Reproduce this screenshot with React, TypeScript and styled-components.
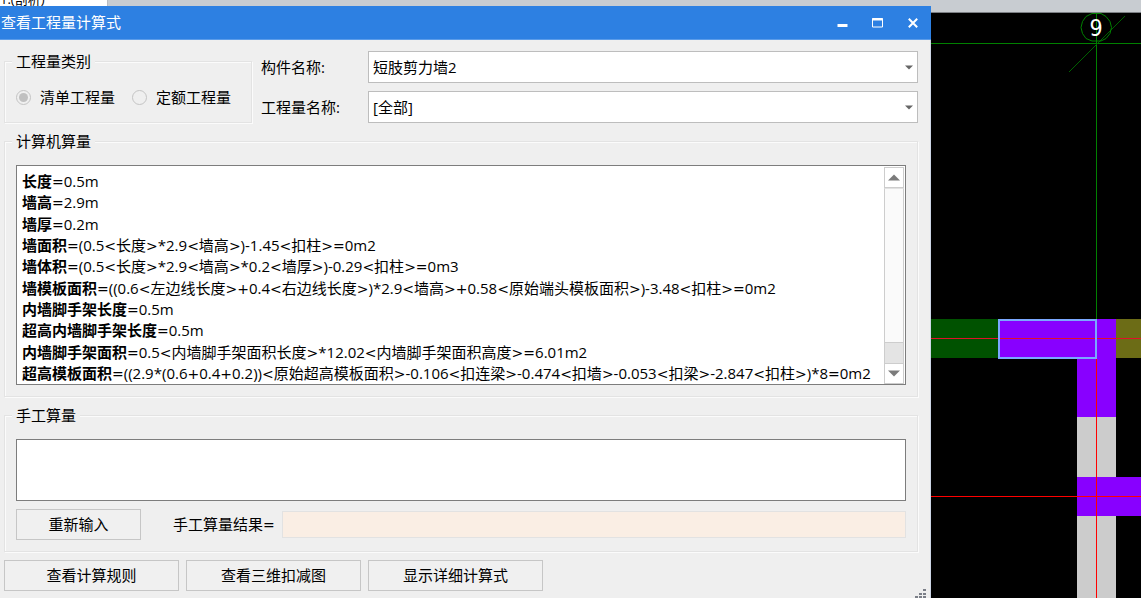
import React from "react";
import styled, { createGlobalStyle } from "styled-components";

const FACE = "#efefef";

const GlobalStyle = createGlobalStyle`
  *, *::before, *::after { box-sizing: border-box; }
  html, body { margin: 0; background: #000; }
  body, button, input, select, textarea {
    font-family: "Open Sans", "Noto Sans CJK SC", sans-serif;
    font-size: 15px;
    line-height: 21px;
    color: #000;
  }
`;

const Workspace = styled.div`
  display: flex;
  min-height: 100vh;
  overflow: hidden;
`;

const DialogColumn = styled.div`
  flex: 1;
  min-width: 0;
  display: flex;
  flex-direction: column;
`;

const TabStrip = styled.div`
  display: flex;
  height: 6px;
  background: #c8ccd1;
`;

const ActiveTab = styled.div`
  width: 108px;
  height: 6px;
  overflow: hidden;
  display: flex;
  align-items: flex-end;
  background: #fff;
  border-right: 1px solid #b9bdc2;
`;

const TabText = styled.span`
  flex: none;
  font-size: 13px;
  line-height: 14px;
`;

const Dialog = styled.section`
  position: relative;
  flex: 1;
  display: flex;
  flex-direction: column;
  background: ${FACE};
  border-right: 1px solid #cdd6e6;
`;

const TitleBar = styled.header`
  display: flex;
  align-items: center;
  justify-content: space-between;
  height: 34px;
  margin-right: -1px;
  padding: 0 1px;
  background: #2d80e2;
  border-bottom: 1px solid #5b9ce9;
`;

const Title = styled.h1`
  margin: 0;
  font-size: 15px;
  font-weight: 400;
  color: #fff;
`;

const WindowButtons = styled.div`
  display: flex;
`;

const WindowButton = styled.button`
  display: grid;
  place-items: center;
  width: 35px;
  height: 33px;
  padding: 0;
  border: 0;
  background: none;
`;

const Body = styled.div`
  flex: 1;
  display: flex;
  flex-direction: column;
  gap: 8px;
  padding: 11px 12px 7px 4px;
`;

const TopRow = styled.div`
  display: flex;
  gap: 9px;
  height: 72px;
`;

const Group = styled.fieldset<{ $width?: string }>`
  width: ${(p) => p.$width ?? "auto"};
  min-width: 0;
  margin: 0;
  padding: 0 11px 11px;
  border: 1px solid #e3e3e3;
  box-shadow: 1px 1px 0 #fbfbfb, inset 1px 1px 0 #fbfbfb;
`;

const Legend = styled.legend`
  margin-left: -4px;
  padding: 0 4px;
  background: ${FACE};
`;

const RadioRow = styled.div`
  display: flex;
  gap: 17px;
  padding-top: 15px;
`;

const RadioLabel = styled.label`
  display: flex;
  align-items: center;
  gap: 9px;
  white-space: nowrap;
`;

const Radio = styled.input`
  appearance: none;
  display: grid;
  place-items: center;
  flex: none;
  width: 15px;
  height: 15px;
  margin: 0;
  border: 1px solid #c4c4c4;
  border-radius: 50%;

  &:checked::before {
    content: "";
    width: 9px;
    height: 9px;
    border-radius: 50%;
    background: #c0c0c0;
  }
`;

const Fields = styled.div`
  flex: 1;
  display: grid;
  grid-template-columns: 107px 1fr;
  grid-auto-rows: 32px;
  row-gap: 8px;
  align-items: center;
`;

const SelectBox = styled.div`
  position: relative;
`;

const Select = styled.select`
  appearance: none;
  display: block;
  width: 100%;
  height: 32px;
  padding: 0 24px 0 4px;
  border: 1px solid #bdbdbd;
  border-radius: 0;
  background: #fff;
`;

const SelectArrow = styled.svg`
  position: absolute;
  right: 5px;
  top: 14px;
  pointer-events: none;
`;

const FormulaBox = styled.div`
  display: flex;
  height: 220px;
  margin-top: 13px;
  border: 1px solid #7d7d7d;
  background: #fff;
`;

const FormulaList = styled.div`
  flex: 1;
  min-width: 0;
  display: flex;
  flex-direction: column;
  justify-content: space-between;
  padding: 5px 0 0 5px;
  white-space: nowrap;
  overflow: hidden;
`;

const Formula = styled.div`
  height: 21px;
`;

const Operator = styled.span`
  font-family: "DejaVu Sans", sans-serif;
  font-size: 14px;
`;

const ScrollBar = styled.div`
  display: flex;
  flex-direction: column;
  width: 21px;
  padding: 1px 1px 0 0;
`;

const ScrollButton = styled.button`
  display: grid;
  place-items: center;
  height: 21px;
  padding: 0;
  border: 1px solid #cdcdcd;
  background: #fff;
`;

const ScrollThumb = styled.div`
  flex: 1;
  border: 1px solid #cdcdcd;
  border-top-color: #e2e2e2;
  background: #fafafa;
`;

const ScrollTrack = styled.div`
  height: 20px;
  border: 1px solid #cdcdcd;
  border-width: 0 1px;
  background: #e4e4e4;
`;

const ManualInput = styled.textarea`
  display: block;
  width: 100%;
  height: 62px;
  margin-top: 13px;
  padding: 4px 5px;
  border: 1px solid #7d7d7d;
  border-radius: 0;
  background: #fff;
  resize: none;
`;

const ResultRow = styled.div`
  display: flex;
  align-items: center;
  padding-top: 8px;
`;

const PushButton = styled.button<{ $width: number }>`
  width: ${(p) => p.$width}px;
  height: 31px;
  padding: 0;
  border: 1px solid #c6c6c6;
  border-radius: 0;
  background: #f0f0f0;
`;

const ResultLabel = styled.label`
  margin: 0 7px 0 32px;
  white-space: nowrap;
`;

const ResultInput = styled.input`
  flex: 1;
  min-width: 0;
  height: 27px;
  border: 1px solid #e2e2e2;
  border-radius: 0;
  background: #faeee4;
`;

const Actions = styled.footer`
  display: flex;
  gap: 7px;
`;

const ResizeGrip = styled.svg`
  position: absolute;
  right: 4px;
  bottom: 0;
`;

const DrawingColumn = styled.div`
  width: 210px;
  display: flex;
  flex-direction: column;
`;

const DrawingStrip = styled.div`
  height: 13px;
  background: #c8ccd1;
  border-bottom: 1px solid #7c7f84;
`;

const Drawing = styled.svg`
  display: block;
  flex: 1;
  width: 100%;
  min-height: 0;
  background: #000;
`;

const formulas: [string, string][] = [
  ["长度", "=0.5m"],
  ["墙高", "=2.9m"],
  ["墙厚", "=0.2m"],
  ["墙面积", "=(0.5<长度>*2.9<墙高>)-1.45<扣柱>=0m2"],
  ["墙体积", "=(0.5<长度>*2.9<墙高>*0.2<墙厚>)-0.29<扣柱>=0m3"],
  ["墙模板面积", "=((0.6<左边线长度>+0.4<右边线长度>)*2.9<墙高>+0.58<原始端头模板面积>)-3.48<扣柱>=0m2"],
  ["内墙脚手架长度", "=0.5m"],
  ["超高内墙脚手架长度", "=0.5m"],
  ["内墙脚手架面积", "=0.5<内墙脚手架面积长度>*12.02<内墙脚手架面积高度>=6.01m2"],
  ["超高模板面积", "=((2.9*(0.6+0.4+0.2))<原始超高模板面积>-0.106<扣连梁>-0.474<扣墙>-0.053<扣梁>-2.847<扣柱>)*8=0m2"],
];

// Splits an expression so that its wide operators get their own face.
function Expression({ text }: { text: string }) {
  return (
    <>
      {text
        .split(/([=<>+]+)/)
        .filter(Boolean)
        .map((part, i) => (/^[=<>+]/.test(part) ? <Operator key={i}>{part}</Operator> : part))}
    </>
  );
}

function Dropdown({ id, value }: { id: string; value: string }) {
  return (
    <SelectBox>
      <Select id={id} defaultValue={value}>
        <option value={value}>{value}</option>
      </Select>
      <SelectArrow width="8" height="5" viewBox="0 0 8 5" aria-hidden="true">
        <path d="M0 0.5h8L4 4.5z" fill="#666" />
      </SelectArrow>
    </SelectBox>
  );
}

function FloorPlan() {
  return (
    <Drawing viewBox="0 0 210 585" preserveAspectRatio="xMinYMin slice" aria-label="平面图">
      <rect x="0" y="306" width="67" height="39" fill="#005200" />
      <rect x="185" y="306" width="25" height="39" fill="#6c6c16" />
      <rect x="146" y="404" width="39" height="181" fill="#ccc" />
      <rect x="67" y="306" width="118" height="39" fill="#8800ff" />
      <rect x="146" y="345" width="39" height="59" fill="#8800ff" />
      <rect x="146" y="464" width="64" height="39" fill="#8800ff" />
      <g fill="none" stroke="#008000">
        <path d="M0 30.5H210" />
        <path d="M165.5 0V306" />
        <path d="M138 59L194 3" stroke="#006000" />
        <path d="M161 0.5h9l5 3 4 5 1.5 6-1.5 6-4 5-5 2.500h-9l-6-2.500-3.500-5-1.500-6 1.500-6 3.500-5z" />
      </g>
      <g fill="none" stroke="#f00">
        <path d="M165.5 345V585M0 483.5H210" />
        <path d="M0 325.5H210" stroke="#e0102a" />
      </g>
      <rect x="68" y="307" width="97" height="38" fill="none" stroke="#7aa8ff" strokeWidth="2" />
      <text x="165" y="23" fill="#fff" textAnchor="middle" fontFamily="DejaVu Sans Condensed, DejaVu Sans, sans-serif" fontSize="23">
        9
      </text>
    </Drawing>
  );
}

export default function App() {
  return (
    <>
      <GlobalStyle />
      <Workspace>
        <DialogColumn>
          <TabStrip>
            <ActiveTab>
              <TabText>1:(剖析)</TabText>
            </ActiveTab>
          </TabStrip>
          <Dialog>
            <TitleBar>
              <Title>查看工程量计算式</Title>
              <WindowButtons>
                <WindowButton aria-label="最小化">
                  <svg width="11" height="11" viewBox="0 0 11 11">
                    <path d="M0.5 8.5h10" stroke="#fff" strokeWidth="3" />
                  </svg>
                </WindowButton>
                <WindowButton aria-label="最大化">
                  <svg width="11" height="10" viewBox="0 0 11 10">
                    <path d="M0.5 0.5h10v8.500h-10z" fill="none" stroke="#fff" />
                    <path d="M0 1.5h11" stroke="#fff" strokeWidth="2" />
                  </svg>
                </WindowButton>
                <WindowButton aria-label="关闭">
                  <svg width="10" height="10" viewBox="0 0 10 10">
                    <path d="M0.8 0.8l8.400 8.400M9.200 0.800L0.800 9.200" stroke="#fff" strokeWidth="2" />
                  </svg>
                </WindowButton>
              </WindowButtons>
            </TitleBar>
            <Body>
              <TopRow>
                <Group $width="248px">
                  <Legend>工程量类别</Legend>
                  <RadioRow>
                    <RadioLabel>
                      <Radio type="radio" name="kind" defaultChecked disabled />
                      清单工程量
                    </RadioLabel>
                    <RadioLabel>
                      <Radio type="radio" name="kind" disabled />
                      定额工程量
                    </RadioLabel>
                  </RadioRow>
                </Group>
                <Fields>
                  <label htmlFor="component">构件名称:</label>
                  <Dropdown id="component" value="短肢剪力墙2" />
                  <label htmlFor="quantity">工程量名称:</label>
                  <Dropdown id="quantity" value="[全部]" />
                </Fields>
              </TopRow>
              <Group>
                <Legend>计算机算量</Legend>
                <FormulaBox>
                  <FormulaList>
                    {formulas.map(([name, text]) => (
                      <Formula key={name}>
                        <b>{name}</b>
                        <Expression text={text} />
                      </Formula>
                    ))}
                  </FormulaList>
                  <ScrollBar>
                    <ScrollButton aria-label="向上滚动">
                      <svg width="12" height="7" viewBox="0 0 12 7">
                        <path d="M0 6.5h12L6 0.5z" fill="#7b7b7b" />
                      </svg>
                    </ScrollButton>
                    <ScrollThumb />
                    <ScrollTrack />
                    <ScrollButton aria-label="向下滚动">
                      <svg width="12" height="7" viewBox="0 0 12 7">
                        <path d="M0 0.5h12L6 6.5z" fill="#7b7b7b" />
                      </svg>
                    </ScrollButton>
                  </ScrollBar>
                </FormulaBox>
              </Group>
              <Group>
                <Legend>手工算量</Legend>
                <ManualInput aria-label="手工算量" />
                <ResultRow>
                  <PushButton $width={125}>重新输入</PushButton>
                  <ResultLabel htmlFor="result">
                    <Expression text="手工算量结果=" />
                  </ResultLabel>
                  <ResultInput id="result" type="text" readOnly />
                </ResultRow>
              </Group>
              <Actions>
                <PushButton $width={175}>查看计算规则</PushButton>
                <PushButton $width={175}>查看三维扣减图</PushButton>
                <PushButton $width={175}>显示详细计算式</PushButton>
              </Actions>
            </Body>
            <ResizeGrip width="11" height="9" viewBox="0 0 11 9" aria-hidden="true">
              <path d="M8 0h3v2h-3zM4 4h3v2h-3zM8 4h3v2h-3zM0 7h3v2h-3zM4 7h3v2h-3zM8 7h3v2h-3z" fill="#7b7f88" />
            </ResizeGrip>
          </Dialog>
        </DialogColumn>
        <DrawingColumn>
          <DrawingStrip />
          <FloorPlan />
        </DrawingColumn>
      </Workspace>
    </>
  );
}
